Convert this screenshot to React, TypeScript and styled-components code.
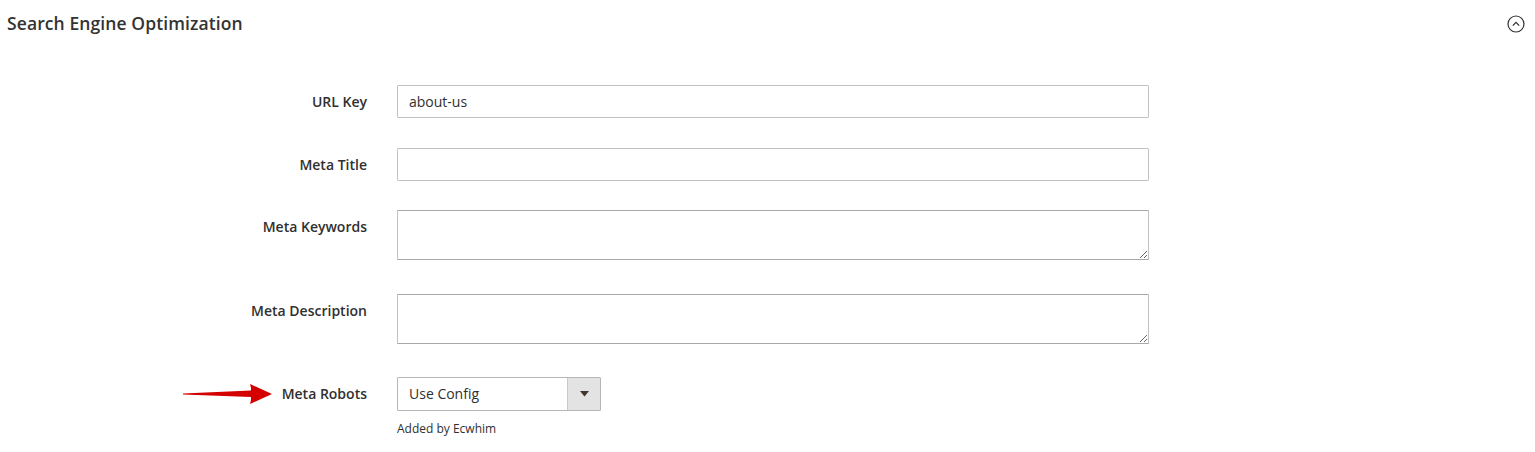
import React from "react";
import styled, { createGlobalStyle } from "styled-components";

const Global = createGlobalStyle`
  html, body { margin: 0; padding: 0; background: #fff; }
  body { font-family: "Open Sans", "Liberation Sans", sans-serif; color: #303030; }
  * { box-sizing: border-box; }
`;

const Section = styled.section`
  width: 1535px;
  height: 452px;
`;

const Header = styled.div`
  display: flex;
  align-items: center;
  justify-content: space-between;
  height: 45px;
  padding: 0 10px 0 7px;
`;

const Title = styled.h2`
  margin: 0;
  font-size: 17.5px;
  font-weight: 600;
  color: #333;
  letter-spacing: 0.1px;
`;

const Toggle = styled.span`
  display: flex;
  width: 18px;
  height: 18px;
  margin-top: 2px;
`;

const Form = styled.div`
  padding-top: 40px;
`;

const Field = styled.div<{ $after: number }>`
  display: grid;
  grid-template-columns: 367px 752px;
  column-gap: 30px;
  margin-bottom: ${(p) => p.$after}px;
`;

const Label = styled.label`
  position: relative;
  text-align: right;
  font-size: 14px;
  font-weight: 600;
  color: #303030;
  line-height: 33px;
`;

const Control = styled.div`
  display: flex;
  flex-direction: column;
`;

const TextInput = styled.input`
  display: block;
  width: 752px;
  height: 33px;
  border: 1px solid #c2c2c2;
  border-radius: 1px;
  padding: 0 11px;
  font-family: inherit;
  font-size: 14px;
  color: #303030;
  outline: none;
`;

const TextArea = styled.textarea`
  display: block;
  width: 752px;
  height: 50px;
  border: 1px solid #c2c2c2;
  border-bottom-color: #a8a8a8;
  border-top-color: #a8a8a8;
  border-radius: 1px;
  padding: 6px 11px;
  font-family: inherit;
  font-size: 14px;
  resize: vertical;
  outline: none;
`;

const Select = styled.div`
  display: flex;
  width: 204px;
  height: 34px;
  border: 1px solid #b5b5b5;
  border-radius: 1px;
`;

const SelectValue = styled.span`
  flex: 1;
  padding-left: 11px;
  font-size: 14px;
  line-height: 32px;
  color: #303030;
`;

const SelectButton = styled.span`
  width: 33px;
  display: flex;
  align-items: center;
  justify-content: center;
  background: #e3e3e3;
  border-left: 1px solid #c8c8c8;
`;

const Note = styled.div`
  margin-top: 9px;
  font-size: 12px;
  color: #303030;
`;

const Arrow = styled.svg`
  position: absolute;
  left: 183px;
  top: 7px;
`;

export default function App() {
  return (
    <>
      <Global />
      <Section>
        <Header>
          <Title>Search Engine Optimization</Title>
          <Toggle>
            <svg width="18" height="18" viewBox="0 0 18 18">
              <circle cx="9" cy="9" r="8" fill="none" stroke="#333" strokeWidth="1.2" />
              <path d="M5.8 10.6 L9 7.4 L12.2 10.6" fill="none" stroke="#333" strokeWidth="1.3" />
            </svg>
          </Toggle>
        </Header>
        <Form>
          <Field $after={30}>
            <Label>URL Key</Label>
            <Control>
              <TextInput defaultValue="about-us" />
            </Control>
          </Field>
          <Field $after={29}>
            <Label>Meta Title</Label>
            <Control>
              <TextInput />
            </Control>
          </Field>
          <Field $after={34}>
            <Label>Meta Keywords</Label>
            <Control>
              <TextArea />
            </Control>
          </Field>
          <Field $after={33}>
            <Label>Meta Description</Label>
            <Control>
              <TextArea />
            </Control>
          </Field>
          <Field $after={0}>
            <Label>
              <Arrow width="90" height="21" viewBox="0 0 90 21">
                <polygon points="0,9.5 68,6.5 68,4 67,0 89,10 67,20 68,16 68,13 0,10.5" fill="#d40000" />
              </Arrow>
              Meta Robots
            </Label>
            <Control>
              <Select>
                <SelectValue>Use Config</SelectValue>
                <SelectButton>
                  <svg width="9" height="6" viewBox="0 0 9 6">
                    <polygon points="0,0 9,0 4.5,5.5" fill="#41362f" />
                  </svg>
                </SelectButton>
              </Select>
              <Note>Added by Ecwhim</Note>
            </Control>
          </Field>
        </Form>
      </Section>
    </>
  );
}
